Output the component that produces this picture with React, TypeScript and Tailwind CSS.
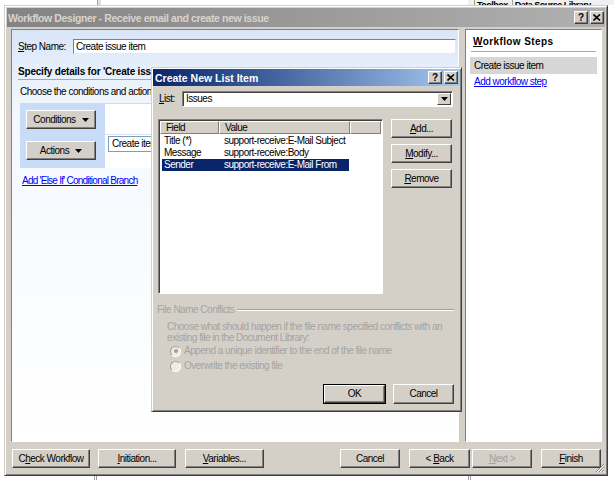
import React from "react";

/**
 * Underlines the access-key letter of a label
 */
function Mn({ text, at }: { text: string; at: number }) {
    return (
        <span className="whitespace-pre">
            {text.slice(0, at)}
            <span className="underline underline-offset-[1px]">{text[at]}</span>
            {text.slice(at + 1)}
        </span>
    );
}

interface BtnProps {
    children: React.ReactNode;
    className?: string;
    disabled?: boolean;
}

/**
 * Classic raised push button
 */
const Btn: React.FC<BtnProps> = ({ children, className = "", disabled }) => {
    return (
        <div
            className={`flex items-center justify-center bg-[#d4d0c8] border border-t-white border-l-white border-r-[#404040] border-b-[#404040] shadow-[inset_-1px_-1px_0_#808080] ${disabled ? "text-[#a0a0a0]" : "text-black"} ${className}`}
        >
            {children}
        </div>
    );
};

/**
 * Small caption button (help / close)
 */
const CapBtn: React.FC<{ kind: "help" | "close" }> = ({ kind }) => {
    return (
        <div className="w-[14px] h-[13px] flex items-center justify-center bg-[#d4d0c8] border border-t-white border-l-white border-r-[#404040] border-b-[#404040] shadow-[inset_-1px_-1px_0_#808080]">
            {kind === "help" ? (
                <span className="font-bold text-[10px] leading-none tracking-normal text-black">?</span>
            ) : (
                <svg width="8" height="7" viewBox="0 0 8 7">
                    <path d="M0.5 0.5 L7 6.5 M7 0.5 L0.5 6.5" stroke="black" strokeWidth="1.6" />
                </svg>
            )}
        </div>
    );
};

const DownCaret = () => (
    <svg width="7" height="4" viewBox="0 0 7 4" className="ml-[6px]">
        <path d="M0 0 H7 L3.5 4 Z" fill="black" />
    </svg>
);

/**
 * Disabled option button
 */
const Radio: React.FC<{ checked?: boolean }> = ({ checked }) => (
    <div className="w-[11px] h-[11px] shrink-0 rounded-full flex items-center justify-center bg-[#ecebe6] border border-t-[#a0a0a0] border-l-[#a0a0a0] border-b-white border-r-white">
        {checked && <div className="w-[4px] h-[4px] rounded-full bg-[#a0a0a0]" />}
    </div>
);

const rows = [
    { field: "Title (*)", value: "support-receive:E-Mail Subject" },
    { field: "Message", value: "support-receive:Body" },
    { field: "Sender", value: "support-receive:E-Mail From", selected: true },
];

/**
 * The "Create New List Item" dialog
 */
const CreateItemDialog = () => {
    return (
        <div className="absolute left-[151px] top-[67px] w-[311px] h-[345px] flex flex-col bg-[#d4d0c8] border border-t-[#d4d0c8] border-l-[#d4d0c8] border-r-[#404040] border-b-[#404040] shadow-[inset_1px_1px_0_#fff,inset_-1px_-1px_0_#808080] p-[1px]">
            {/* Title bar */}
            <div className="h-[17px] shrink-0 flex items-center pl-[2px] pr-[2px] bg-gradient-to-r from-[#0a246a] to-[#a6caf0]">
                <span className="flex-1 text-white font-bold text-[10.5px] tracking-[0px]">Create New List Item</span>
                <div className="flex gap-[2px]">
                    <CapBtn kind="help" />
                    <CapBtn kind="close" />
                </div>
            </div>

            {/* List picker */}
            <div className="mt-[5px] flex items-center pl-[6px] pr-[7px] h-[16px]">
                <span className="w-[23px]"><Mn text="List:" at={0} /></span>
                <div className="flex-1 h-[16px] flex items-center bg-white border border-t-[#808080] border-l-[#808080] border-b-white border-r-white shadow-[inset_1px_1px_0_#404040]">
                    <span className="flex-1 pl-[3px]">Issues</span>
                    <div className="w-[14px] h-[12px] mr-[1px] flex items-center justify-center bg-[#d4d0c8] border border-t-white border-l-white border-r-[#404040] border-b-[#404040]">
                        <svg width="7" height="4" viewBox="0 0 7 4">
                            <path d="M0 0 H7 L3.5 4 Z" fill="black" />
                        </svg>
                    </div>
                </div>
            </div>

            {/* Field list and its buttons */}
            <div className="mt-[12px] flex pl-[5px] gap-[8px]">
                <div className="w-[225px] h-[175px] bg-white border border-t-[#808080] border-l-[#808080] border-b-white border-r-white shadow-[inset_1px_1px_0_#404040] p-[1px]">
                    <div className="h-[13px] flex">
                        <div className="w-[59px] pl-[5px] flex items-center bg-[#d4d0c8] border border-t-white border-l-white border-r-[#808080] border-b-[#808080]">Field</div>
                        <div className="w-[131px] pl-[5px] flex items-center bg-[#d4d0c8] border border-t-white border-l-white border-r-[#808080] border-b-[#808080]">Value</div>
                        <div className="flex-1 bg-[#d4d0c8] border border-t-white border-l-white border-r-[#808080] border-b-[#808080]" />
                    </div>
                    <div className="mt-[1px] flex flex-col">
                        {rows.map((r) => (
                            <div
                                key={r.field}
                                className={`ml-[2px] w-[187px] h-[12px] flex items-center ${r.selected ? "bg-[#0a246a] text-white" : ""}`}
                            >
                                <span className="w-[62px] pl-[2px]">{r.field}</span>
                                <span>{r.value}</span>
                            </div>
                        ))}
                    </div>
                </div>
                <div className="flex flex-col gap-[6px]">
                    <Btn className="w-[61px] h-[19px]"><Mn text="Add..." at={0} /></Btn>
                    <Btn className="w-[61px] h-[19px]"><Mn text="Modify..." at={0} /></Btn>
                    <Btn className="w-[61px] h-[19px]"><Mn text="Remove" at={0} /></Btn>
                </div>
            </div>

            {/* File name conflicts (disabled) */}
            <div className="mt-[10px] flex items-center pl-[4px] pr-[6px] text-[#a3a3a3]">
                <span>File Name Conflicts</span>
                <div className="flex-1 ml-[3px] h-[2px] border-t border-t-[#a0a0a0] border-b border-b-white" />
            </div>
            <div className="mt-[5px] pl-[14px] leading-[11px] text-[#a3a3a3]">
                <div>Choose what should happen if the file name specified conflicts with an</div>
                <div>existing file in the Document Library:</div>
            </div>
            <div className="mt-[1px] pl-[17px] flex flex-col gap-[1px] text-[#a3a3a3]">
                <div className="h-[14px] flex items-center gap-[3px]">
                    <Radio checked />
                    <span>Append a unique identifier to the end of the file name</span>
                </div>
                <div className="h-[14px] flex items-center gap-[3px]">
                    <Radio />
                    <span>Overwrite the existing file</span>
                </div>
            </div>

            <div className="mt-[11px] flex justify-end gap-[7px] pr-[6px]">
                <div className="border border-black">
                    <Btn className="w-[61px] h-[18px]">OK</Btn>
                </div>
                <Btn className="w-[61px] h-[20px]">Cancel</Btn>
            </div>
        </div>
    );
};

/**
 * Workflow designer window
 */
export default function App() {
    return (
        <div className="relative w-[614px] h-[480px] overflow-hidden bg-white flex flex-col text-[10px] leading-[12px] tracking-[-0.5px] text-black font-['Liberation_Sans',Arial,sans-serif]">
            {/* Host application behind the window */}
            <div className="h-[5px] shrink-0 flex overflow-hidden">
                <div className="w-[97px] shrink-0" />
                <div className="w-[1px] bg-[#a0a0a0]" />
                <div className="w-[3px] bg-[#e0e0e0]" />
                <div className="flex-1" />
                <div className="w-[146px] flex bg-[#f0f0f0] pl-[6px] gap-[4px] text-[9px] leading-[10px] font-bold">
                    <span className="border-l border-[#a0a0a0] pl-[2px]">Toolbox</span>
                    <span className="border-l border-[#a0a0a0] pl-[2px]">Data Source Library</span>
                </div>
            </div>

            <div className="flex flex-1 min-h-0">
                <div className="w-[4px] shrink-0" />

                {/* Window frame */}
                <div className="relative w-[604px] h-[471px] shrink-0 flex flex-col bg-[#d4d0c8] border border-t-[#d4d0c8] border-l-[#d4d0c8] border-r-[#404040] border-b-[#404040] shadow-[inset_1px_1px_0_#fff,inset_-1px_-1px_0_#808080] p-[2px]">
                    {/* Title bar */}
                    <div className="h-[19px] shrink-0 flex items-center pl-[1px] pr-[1px] bg-gradient-to-r from-[#848484] to-[#b0b0b0]">
                        <span className="flex-1 font-bold text-[10.5px] tracking-[-0.4px] text-[#d8d4cc]">
                            Workflow Designer - Receive email and create new issue
                        </span>
                        <div className="flex gap-[2px]">
                            <CapBtn kind="help" />
                            <CapBtn kind="close" />
                        </div>
                    </div>

                    {/* Panels */}
                    <div className="mt-[2px] h-[413px] flex gap-[6px] pl-[4px] pr-[3px]">
                        {/* Step editor */}
                        <div className="w-[448px] flex flex-col border border-t-[#808080] border-l-[#808080] border-b-white border-r-white bg-gradient-to-b from-[#d9e6f8] via-[#f4f8fd] via-[20%] to-white">
                            <div className="mt-[9px] h-[15px] flex items-center pl-[6px] pr-[2px]">
                                <span className="w-[55px]"><Mn text="Step Name:" at={0} /></span>
                                <div className="flex-1 h-[15px] flex items-center pl-[2px] bg-white border border-t-[#808080] border-l-[#808080] border-b-[#e8e8e8] border-r-[#e8e8e8]">
                                    Create issue item
                                </div>
                            </div>

                            <div className="mt-[12px] ml-[6px] mr-[2px] pb-[1px] border-b border-[#a8a8a8] font-bold tracking-[-0.2px]">
                                Specify details for 'Create issue item'
                            </div>

                            <div className="mt-[6px] pl-[8px]">Choose the conditions and actions that define this step:</div>

                            {/* Condition / action block */}
                            <div className="mt-[5px] ml-[8px] mr-[2px] h-[65px] flex">
                                <div className="w-[85px] flex flex-col pl-[6px] pt-[7px] gap-[12px] bg-[#c8dcf8]">
                                    <Btn className="w-[70px] h-[19px]">Conditions<DownCaret /></Btn>
                                    <Btn className="w-[70px] h-[19px]">Actions<DownCaret /></Btn>
                                </div>
                                <div className="flex-1 flex flex-col border-t border-[#c8dcf8] bg-white">
                                    <div className="h-[31px] border-b border-[#d8e4f4]" />
                                    <div className="ml-[3px] mt-[1px] h-[16px] w-[200px] flex items-center pl-[3px] border border-[#7f9db9]">
                                        Create item in Issues
                                    </div>
                                </div>
                            </div>

                            <div className="mt-[7px] pl-[10px] text-[#0000ff] underline underline-offset-[1px] tracking-[-0.75px]">
                                Add 'Else If' Conditional Branch
                            </div>
                        </div>

                        {/* Step list */}
                        <div className="w-[137px] flex flex-col bg-white border border-t-[#808080] border-l-[#808080] border-b-white border-r-white">
                            <div className="mt-[6px] mx-[5px] pl-[2px] pb-[3px] border-b border-[#a8a8a8] font-bold tracking-[0.4px]">
                                <Mn text="Workflow Steps" at={0} />
                            </div>
                            <div className="mt-[5px] mx-[4px] h-[17px] flex items-center pl-[4px] bg-[#d6d6d6]">
                                Create issue item
                            </div>
                            <div className="mt-[2px] pl-[8px] text-[#0000ff] underline underline-offset-[1px]">
                                Add workflow step
                            </div>
                        </div>
                    </div>

                    {/* Wizard buttons */}
                    <div className="mt-[7px] flex pl-[5px] pr-[4px]">
                        <Btn className="w-[78px] h-[19px]"><Mn text="Check Workflow" at={1} /></Btn>
                        <Btn className="ml-[8px] w-[78px] h-[19px]"><Mn text="Initiation..." at={0} /></Btn>
                        <Btn className="ml-[9px] w-[79px] h-[19px]"><Mn text="Variables..." at={0} /></Btn>
                        <div className="flex-1" />
                        <Btn className="w-[60px] h-[19px]">Cancel</Btn>
                        <Btn className="ml-[9px] w-[61px] h-[19px]"><Mn text="< Back" at={2} /></Btn>
                        <Btn className="ml-[2px] w-[60px] h-[19px]" disabled><Mn text="Next >" at={0} /></Btn>
                        <Btn className="ml-[9px] w-[60px] h-[19px]"><Mn text="Finish" at={0} /></Btn>
                    </div>

                    {/* Size grip */}
                    <svg width="11" height="11" viewBox="0 0 11 11" className="absolute right-[2px] bottom-[2px]">
                        <path d="M10 2 L2 10 M10 5 L5 10 M10 8 L8 10" stroke="#808080" strokeWidth="1" />
                        <path d="M10 3 L3 10 M10 6 L6 10 M10 9 L9 10" stroke="#ffffff" strokeWidth="1" />
                    </svg>
                </div>
                <div className="flex-1" />
            </div>

            {/* Host application below the window */}
            <div className="h-[4px] shrink-0 flex">
                <div className="ml-[94px] w-[3px] border-x border-[#a0a0a0]" />
                <div className="ml-[371px] w-[3px] border-x border-[#a0a0a0]" />
            </div>

            <CreateItemDialog />
        </div>
    );
}
